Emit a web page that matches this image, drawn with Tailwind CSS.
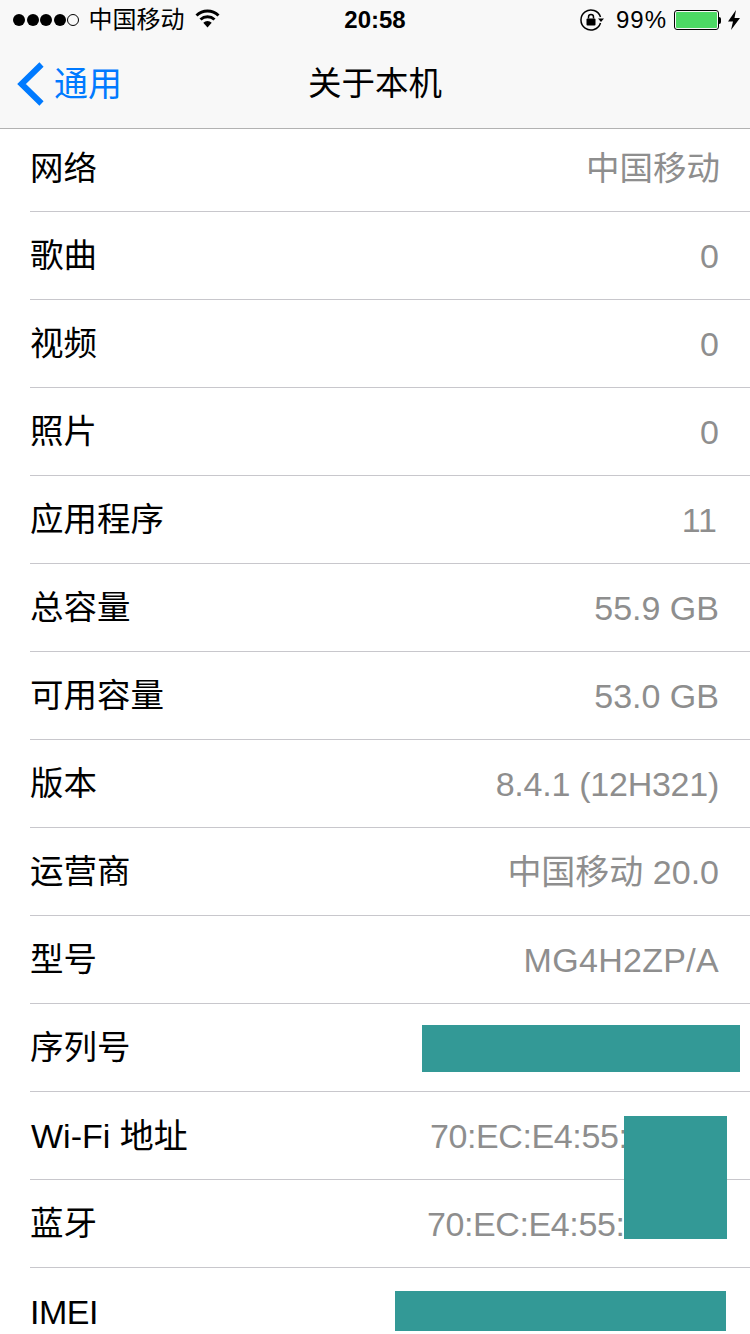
<!DOCTYPE html>
<html lang="zh-CN">
<head>
  <meta charset="UTF-8" />
  <title>关于本机</title>
  <script src="https://cdn.jsdelivr.net/npm/@tailwindcss/browser@4"></script>
</head>
<body class="bg-white font-['Liberation_Sans','Noto_Sans_CJK_SC',sans-serif] text-black">
  <div class="relative w-[750px] h-[1334px] overflow-hidden">
    <!-- status bar + nav -->
    <header class="h-[129px] bg-[#f8f8f8] border-b border-[#b2b2b2]">
      <div class="relative flex items-center h-[40px] pl-[13px] pr-[10px] text-[24px] leading-none">
        <div class="flex items-center gap-[1.5px]">
          <span class="w-[12px] h-[12px] rounded-full bg-black"></span>
          <span class="w-[12px] h-[12px] rounded-full bg-black"></span>
          <span class="w-[12px] h-[12px] rounded-full bg-black"></span>
          <span class="w-[12px] h-[12px] rounded-full bg-black"></span>
          <span class="w-[12px] h-[12px] rounded-full border border-black"></span>
        </div>
        <span class="ml-[9.5px]">中国移动</span>
        <svg class="ml-[10px] mb-[3px]" width="25" height="19" viewBox="0 0 25 19" fill="none" stroke="#000" stroke-width="3">
          <path d="M1.500 6.500a16 16 0 0 1 22 0" />
          <path d="M5.500 10.500a10.500 10.500 0 0 1 14 0" />
          <path d="M12.500 18.500l-4.200-4.700a6 6 0 0 1 8.400 0z" fill="#000" stroke="none" />
        </svg>
        <span class="absolute left-0 right-0 text-center font-bold">20:58</span>
        <div class="ml-auto flex items-center">
          <svg width="26" height="24" viewBox="0 0 26 24" fill="none">
            <path d="M21.500 15a10 10 0 1 1 0-6" stroke="#000" stroke-width="1.500" />
            <path d="M19 10.500h6l-3 3.500z" fill="#000" />
            <rect x="7.500" y="10.500" width="9" height="7" rx="1" fill="#000" />
            <path d="M9.500 10.500V9a2.500 2.500 0 0 1 5 0v1.500" stroke="#000" stroke-width="1.500" />
          </svg>
          <span class="ml-[11px] tracking-[1px]">99%</span>
          <div class="ml-[7px] w-[45px] h-[20px] rounded-[3px] border border-black p-[1px]">
            <div class="w-full h-full bg-[#4cd964] rounded-[1px]"></div>
          </div>
          <span class="w-[2px] h-[7px] bg-black rounded-r-[2px]"></span>
          <svg class="ml-[7px]" width="12" height="20" viewBox="0 0 12 20">
            <path d="M8 0L0 11.500h5L3 20l9-12H6.500z" fill="#000" />
          </svg>
        </div>
      </div>
      <div class="relative flex items-center h-[88px] pl-[17px]">
        <svg width="27" height="44" viewBox="0 0 27 44" fill="none" stroke="#007aff" stroke-width="6">
          <path d="M24.500 2.500L4.500 22l20 19.500" />
        </svg>
        <span class="ml-[10px] text-[34px] leading-none text-[#007aff]">通用</span>
        <span class="absolute left-0 right-0 text-center text-[33.5px] leading-none">关于本机</span>
      </div>
    </header>

    <!-- list -->
    <ul class="text-[34px] leading-none">
      <li class="flex items-center justify-between h-[83px] ml-[30px] pr-[30px] pb-[3px] border-b border-[#c8c7cc]"><span class="text-[33.5px]">网络</span><span class="text-[33.5px] text-[#8e8e8e]">中国移动</span></li>
      <li class="flex items-center justify-between h-[88px] ml-[30px] pr-[31px] pt-[1px] border-b border-[#c8c7cc]"><span class="text-[33.5px]">歌曲</span><span class="text-[#8e8e8e]">0</span></li>
      <li class="flex items-center justify-between h-[88px] ml-[30px] pr-[31px] pt-[1px] border-b border-[#c8c7cc]"><span class="text-[33.5px]">视频</span><span class="text-[#8e8e8e]">0</span></li>
      <li class="flex items-center justify-between h-[88px] ml-[30px] pr-[31px] pt-[1px] border-b border-[#c8c7cc]"><span class="text-[33.5px]">照片</span><span class="text-[#8e8e8e]">0</span></li>
      <li class="flex items-center justify-between h-[88px] ml-[30px] pr-[33px] pt-[1px] border-b border-[#c8c7cc]"><span class="text-[33.5px]">应用程序</span><span class="text-[#8e8e8e]">11</span></li>
      <li class="flex items-center justify-between h-[88px] ml-[30px] pr-[31px] pt-[1px] border-b border-[#c8c7cc]"><span class="text-[33.5px]">总容量</span><span class="text-[#8e8e8e]">55.9 GB</span></li>
      <li class="flex items-center justify-between h-[88px] ml-[30px] pr-[31px] pt-[1px] border-b border-[#c8c7cc]"><span class="text-[33.5px]">可用容量</span><span class="text-[#8e8e8e]">53.0 GB</span></li>
      <li class="flex items-center justify-between h-[88px] ml-[30px] pr-[31px] pt-[1px] border-b border-[#c8c7cc]"><span class="text-[33.5px]">版本</span><span class="text-[#8e8e8e] tracking-[-0.25px]">8.4.1 (12H321)</span></li>
      <li class="flex items-center justify-between h-[88px] ml-[30px] pr-[31px] pt-[1px] border-b border-[#c8c7cc]"><span class="text-[33.5px]">运营商</span><span class="text-[#8e8e8e]">中国移动 20.0</span></li>
      <li class="flex items-center justify-between h-[88px] ml-[30px] pr-[31px] pt-[1px] border-b border-[#c8c7cc]"><span class="text-[33.5px]">型号</span><span class="text-[#8e8e8e] tracking-[0.3px]">MG4H2ZP/A</span></li>
      <li class="flex items-center justify-between h-[88px] ml-[30px] pr-[31px] pt-[1px] border-b border-[#c8c7cc]"><span class="text-[33.5px]">序列号</span></li>
      <li class="flex items-center h-[88px] ml-[30px] pl-[1px] pt-[1px] border-b border-[#c8c7cc]"><span>Wi-Fi 地址</span><span class="absolute left-[430px] text-[#8e8e8e] tracking-[-0.4px]">70:EC:E4:55:</span></li>
      <li class="flex items-center h-[88px] ml-[30px] pt-[1px] border-b border-[#c8c7cc]"><span class="text-[33.5px]">蓝牙</span><span class="absolute left-[427px] text-[#8e8e8e] tracking-[-0.4px]">70:EC:E4:55:</span></li>
      <li class="flex items-center h-[88px] ml-[30px]"><span class="tracking-[-0.5px]">IMEI</span></li>
    </ul>

    <!-- redaction blocks painted over the screenshot -->
    <div class="absolute left-[422px] top-[1025px] w-[318px] h-[47px] bg-[#339996]"></div>
    <div class="absolute left-[624px] top-[1116px] w-[103px] h-[123px] bg-[#339996]"></div>
    <div class="absolute left-[395px] top-[1291px] w-[331px] h-[40px] bg-[#339996]"></div>
  </div>
</body>
</html>
